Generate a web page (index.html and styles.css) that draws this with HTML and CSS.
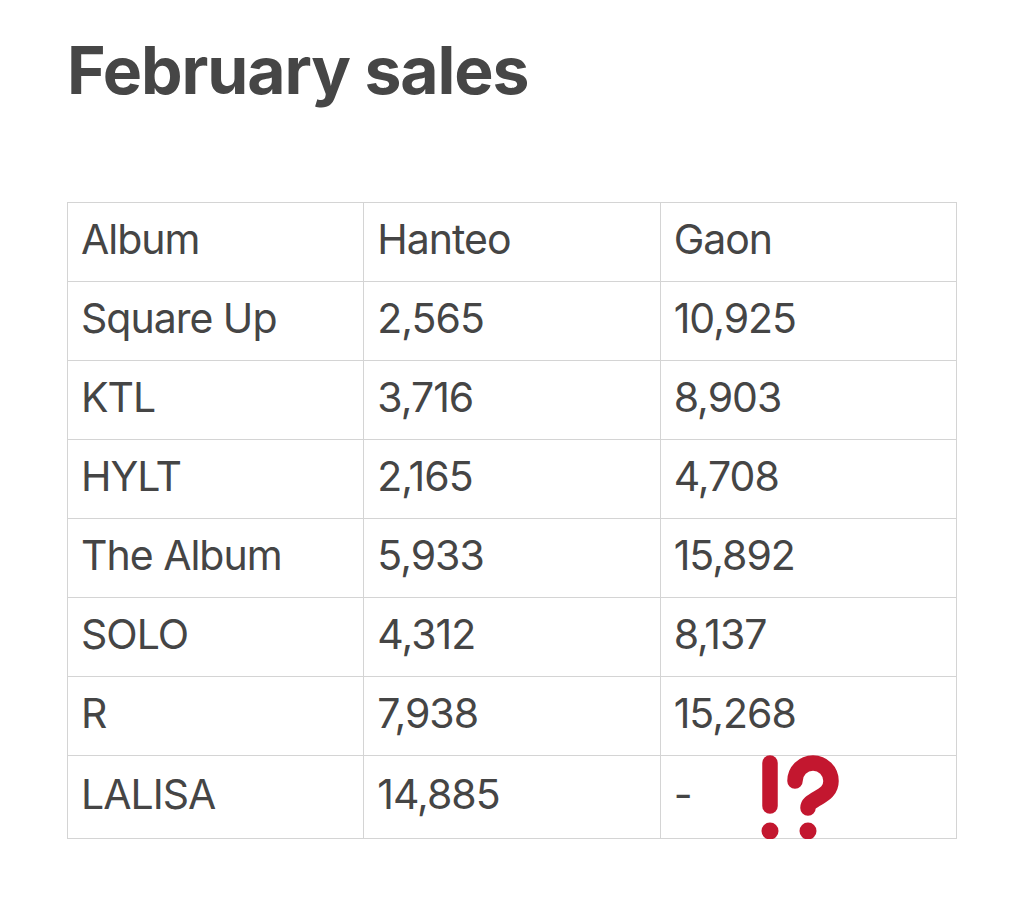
FILE: index.html
```html
<!DOCTYPE html>
<html lang="en">
<head>
<meta charset="utf-8">
<title>February sales</title>
<link rel="stylesheet" href="styles.css">
</head>
<body>
<main class="page">
  <h1 class="title">February sales</h1>
  <table class="sales">
    <colgroup><col class="c"><col class="c"><col class="c"></colgroup>
    <tbody>
      <tr><td>Album</td><td>Hanteo</td><td>Gaon</td></tr>
      <tr><td>Square Up</td><td>2,565</td><td>10,925</td></tr>
      <tr><td>KTL</td><td>3,716</td><td>8,903</td></tr>
      <tr><td>HYLT</td><td>2,165</td><td>4,708</td></tr>
      <tr><td>The Album</td><td>5,933</td><td>15,892</td></tr>
      <tr><td>SOLO</td><td>4,312</td><td>8,137</td></tr>
      <tr><td>R</td><td>7,938</td><td>15,268</td></tr>
      <tr class="last"><td>LALISA</td><td>14,885</td><td class="mark-cell">-
        <svg class="interrobang" viewBox="0 0 82 90" width="82" height="90" aria-hidden="true">
          <g fill="none" stroke="#c3172f" stroke-width="15.5" stroke-linecap="round" stroke-linejoin="round">
            <line x1="10" y1="11" x2="10" y2="54"/>
            <path d="M35 29 A18 18 0 0 1 71 29 C71 38 65 42 58 46 C51 50 48 52 48 56"/>
          </g>
          <circle cx="10" cy="79" r="8.5" fill="#c3172f"/>
          <circle cx="48" cy="79" r="8.5" fill="#c3172f"/>
        </svg>
      </td></tr>
    </tbody>
  </table>
</main>
</body>
</html>
```
FILE: styles.css
```css
html, body {
  margin: 0;
  padding: 0;
  background: #ffffff;
}
.page {
  font-family: Inter, "Liberation Sans", sans-serif;
  color: #444444;
  padding: 30px 0 0 67px;
}
.title {
  margin: 0 0 92px 0;
  font-size: 66px;
  line-height: 80px;
  font-weight: 700;
  letter-spacing: -1.1px;
  color: #464646;
}
.sales {
  border-collapse: collapse;
  table-layout: fixed;
  width: 890px;
}
.sales .c { width: 33.333%; }
.sales td {
  border: 1px solid #d4d4d4;
  height: 79px;
  padding: 0 0 6px 13px;
  font-size: 41px;
  line-height: 44px;
  font-weight: 400;
  letter-spacing: -1px;
  color: #454545;
  vertical-align: middle;
  box-sizing: border-box;
}
.sales tr.last td { height: 83px; }
.mark-cell { position: relative; }
.interrobang {
  position: absolute;
  left: 99px;
  top: -4px;
}
```
